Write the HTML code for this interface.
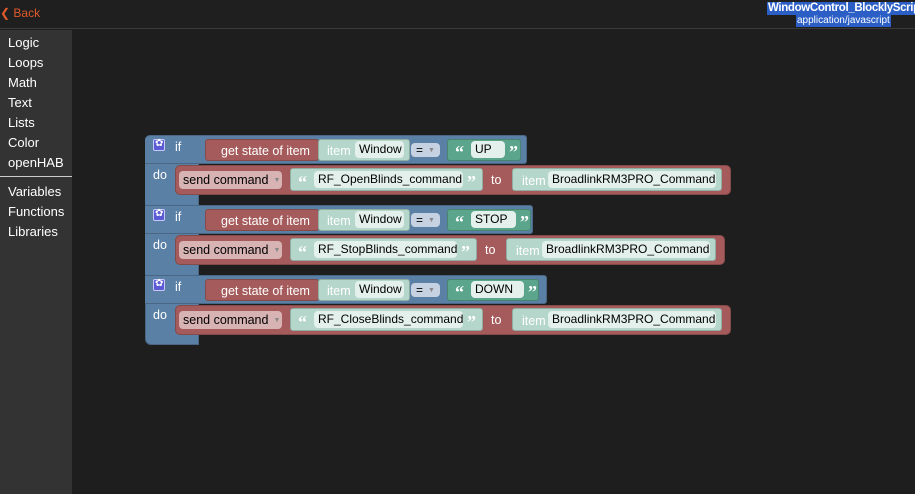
<!DOCTYPE html>
<html><head><meta charset="utf-8">
<style>
*{margin:0;padding:0;box-sizing:border-box}
body{width:915px;height:494px;background:#1e1e1e;font-family:"Liberation Sans",Arial,sans-serif;position:relative;overflow:hidden;font-size:12px}
.abs{position:absolute}
#top{left:0;top:0;width:915px;height:29px;background:#1f1f1f;border-bottom:1px solid #3a3a3a}
#side{left:0;top:30px;width:72px;height:464px;background:#333}
.cat{position:absolute;left:8px;color:#fff;font-size:13px}
.blue{background:#5b80a5;border:1px solid #496684}
.red{background:#a55b5b;border:1px solid #844949;border-radius:5px}
.red2{background:#a55b5b;border:1px solid #844949;border-radius:3px}
.lt{background:#b5d6ca;border:1px solid #91aca2;border-radius:3px}
.grn{background:#5ba58c;border:1px solid #498470;border-radius:3px}
.fld{background:#e4f0ec;border-radius:4px;color:#000;font-size:12px;line-height:17px;padding-left:4px;height:17px;white-space:nowrap}
.wt{color:#fff;font-size:12.5px;line-height:14px}
.q{color:#fff;font-weight:bold;font-size:18px;font-family:"Liberation Serif",serif;line-height:18px}
.dd{background:#d8b3b3;border-radius:4px;color:#000;line-height:18px;height:18px;padding-left:4px;font-size:12.5px;white-space:nowrap}
.eq{background:#c6d2e2;border-radius:4px;color:#000;line-height:14px;height:14px;padding-left:5px;font-size:12px}
.arr{font-size:7px;color:#888;margin-left:5px;vertical-align:2px}
.gear{width:12px;height:12px;background:#5b5bd6;border:1px solid #c8c8ff;border-radius:2px}
</style></head><body>
<div id="top" class="abs"></div>
<div class="abs" style="left:0;top:6px;color:#e05a2b;font-size:12px">&#10094; Back</div>
<div class="abs" style="left:767px;top:2px;background:#2b5fc6;color:#fff;font-weight:bold;font-size:11.5px;letter-spacing:-0.35px;line-height:13px;padding:0 1px;white-space:nowrap">WindowControl_BlocklyScript</div>
<div class="abs" style="left:796px;top:15px;background:#2b5fc6;color:#fff;font-size:10px;line-height:12px;padding:0 1px">application/javascript</div>
<div id="side" class="abs">
<div class="cat" style="top:5px">Logic</div>
<div class="cat" style="top:25px">Loops</div>
<div class="cat" style="top:45px">Math</div>
<div class="cat" style="top:65px">Text</div>
<div class="cat" style="top:85px">Lists</div>
<div class="cat" style="top:105px">Color</div>
<div class="cat" style="top:125px">openHAB</div>
<div class="abs" style="left:0;top:146px;width:72px;height:1px;background:#ccc"></div>
<div class="cat" style="top:154px">Variables</div>
<div class="cat" style="top:174px">Functions</div>
<div class="cat" style="top:194px">Libraries</div>
</div>

<div class="abs blue" style="left:145px;top:135px;width:54px;height:210px;border-radius:5px 0 0 6px"></div>

<!-- block 1 -->
<div class="abs blue" style="left:145px;top:135px;width:382px;height:29px;border-radius:5px 3px 3px 0;border-left:0"></div>
<div class="abs blue" style="left:145px;top:164px;width:30px;height:40px;border:0"></div>
<div class="abs gear" style="left:153px;top:139px"></div><div class="abs" style="left:155px;top:138px;color:#fff;font-size:10px">✿</div>
<div class="abs wt" style="left:175px;top:140px">if</div>
<div class="abs wt" style="left:153px;top:168px">do</div>
<div class="abs red2" style="left:205px;top:139px;width:114px;height:22px"></div>
<div class="abs wt" style="left:221px;top:144px">get state of item</div>
<div class="abs lt" style="left:318px;top:139px;width:92px;height:22px"></div>
<div class="abs wt" style="left:327px;top:144px">item</div>
<div class="abs fld" style="left:355px;top:141px;width:49px">Window</div>
<div class="abs eq" style="left:411px;top:143px;width:29px">=<span class="arr">▼</span></div>
<div class="abs grn" style="left:447px;top:139px;width:74px;height:22px"></div>
<div class="abs q" style="left:455px;top:143px">“</div>
<div class="abs fld" style="left:471px;top:141px;width:34px">UP</div>
<div class="abs q" style="left:509px;top:143px">”</div>
<div class="abs red" style="left:175px;top:165px;width:556px;height:30px"></div>
<div class="abs dd" style="left:179px;top:171px;width:103px">send command<span class="arr">▼</span></div>
<div class="abs lt" style="left:290px;top:168px;width:193px;height:23px"></div>
<div class="abs q" style="left:298px;top:173px">“</div>
<div class="abs fld" style="left:314px;top:171px;width:149px">RF_OpenBlinds_command</div>
<div class="abs q" style="left:467px;top:173px">”</div>
<div class="abs wt" style="left:491px;top:173px">to</div>
<div class="abs lt" style="left:512px;top:168px;width:210px;height:23px"></div>
<div class="abs wt" style="left:522px;top:174px">item</div>
<div class="abs fld" style="left:548px;top:171px;width:168px">BroadlinkRM3PRO_Command</div>

<!-- block 2 -->
<div class="abs blue" style="left:145px;top:205px;width:388px;height:29px;border-radius:0 3px 3px 0;border-left:0"></div>
<div class="abs blue" style="left:145px;top:234px;width:30px;height:40px;border:0"></div>
<div class="abs gear" style="left:153px;top:209px"></div><div class="abs" style="left:155px;top:208px;color:#fff;font-size:10px">✿</div>
<div class="abs wt" style="left:175px;top:210px">if</div>
<div class="abs wt" style="left:153px;top:238px">do</div>
<div class="abs red2" style="left:205px;top:209px;width:114px;height:22px"></div>
<div class="abs wt" style="left:221px;top:214px">get state of item</div>
<div class="abs lt" style="left:318px;top:209px;width:92px;height:22px"></div>
<div class="abs wt" style="left:327px;top:214px">item</div>
<div class="abs fld" style="left:355px;top:211px;width:49px">Window</div>
<div class="abs eq" style="left:411px;top:213px;width:29px">=<span class="arr">▼</span></div>
<div class="abs grn" style="left:447px;top:209px;width:84px;height:22px"></div>
<div class="abs q" style="left:455px;top:213px">“</div>
<div class="abs fld" style="left:471px;top:211px;width:45px">STOP</div>
<div class="abs q" style="left:520px;top:213px">”</div>
<div class="abs red" style="left:175px;top:235px;width:550px;height:30px"></div>
<div class="abs dd" style="left:179px;top:241px;width:103px">send command<span class="arr">▼</span></div>
<div class="abs lt" style="left:290px;top:238px;width:187px;height:23px"></div>
<div class="abs q" style="left:298px;top:243px">“</div>
<div class="abs fld" style="left:314px;top:241px;width:143px">RF_StopBlinds_command</div>
<div class="abs q" style="left:461px;top:243px">”</div>
<div class="abs wt" style="left:485px;top:243px">to</div>
<div class="abs lt" style="left:506px;top:238px;width:210px;height:23px"></div>
<div class="abs wt" style="left:516px;top:244px">item</div>
<div class="abs fld" style="left:542px;top:241px;width:168px">BroadlinkRM3PRO_Command</div>

<!-- block 3 -->
<div class="abs blue" style="left:145px;top:275px;width:402px;height:29px;border-radius:0 3px 3px 0;border-left:0"></div>
<div class="abs gear" style="left:153px;top:279px"></div><div class="abs" style="left:155px;top:278px;color:#fff;font-size:10px">✿</div>
<div class="abs wt" style="left:175px;top:280px">if</div>
<div class="abs wt" style="left:153px;top:308px">do</div>
<div class="abs red2" style="left:205px;top:279px;width:114px;height:22px"></div>
<div class="abs wt" style="left:221px;top:284px">get state of item</div>
<div class="abs lt" style="left:318px;top:279px;width:92px;height:22px"></div>
<div class="abs wt" style="left:327px;top:284px">item</div>
<div class="abs fld" style="left:355px;top:281px;width:49px">Window</div>
<div class="abs eq" style="left:411px;top:283px;width:29px">=<span class="arr">▼</span></div>
<div class="abs grn" style="left:447px;top:279px;width:92px;height:22px"></div>
<div class="abs q" style="left:455px;top:283px">“</div>
<div class="abs fld" style="left:471px;top:281px;width:53px">DOWN</div>
<div class="abs q" style="left:528px;top:283px">”</div>
<div class="abs red" style="left:175px;top:305px;width:556px;height:30px"></div>
<div class="abs dd" style="left:179px;top:311px;width:103px">send command<span class="arr">▼</span></div>
<div class="abs lt" style="left:290px;top:308px;width:193px;height:23px"></div>
<div class="abs q" style="left:298px;top:313px">“</div>
<div class="abs fld" style="left:314px;top:311px;width:149px">RF_CloseBlinds_command</div>
<div class="abs q" style="left:467px;top:313px">”</div>
<div class="abs wt" style="left:491px;top:313px">to</div>
<div class="abs lt" style="left:512px;top:308px;width:210px;height:23px"></div>
<div class="abs wt" style="left:522px;top:314px">item</div>
<div class="abs fld" style="left:548px;top:311px;width:168px">BroadlinkRM3PRO_Command</div>
</body></html>
